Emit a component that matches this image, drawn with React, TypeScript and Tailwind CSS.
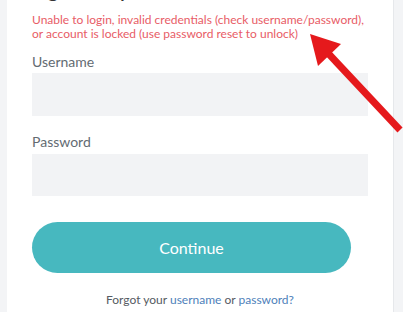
import React from 'react';

function RedArrow() {
  return (
    <svg
      className="absolute left-0 top-0 pointer-events-none"
      width="403"
      height="312"
      viewBox="0 0 403 312"
    >
      <line x1="400" y1="130" x2="326" y2="51" stroke="#e5191c" strokeWidth="7" strokeLinecap="butt" />
      <polygon points="310,34 341,44 318,66" fill="#e5191c" />
    </svg>
  );
}

export default function App() {
  return (
    <div className="relative w-[403px] h-[312px] overflow-hidden bg-[#f3f4f6]" style={{ fontFamily: 'Lato, "Noto Sans", sans-serif' }}>
      <div className="flow-root ml-[7px] w-[387px] h-full bg-white border-r border-[#e6e8eb] pl-[25px]">
        <h1 className="-mt-[22px] text-[20px] leading-[24px] font-semibold text-[#333]">Sign in to your account</h1>

        <p className="mt-[11px] w-[336px] text-[12px] leading-[13.5px] text-[#e85c66]">
          Unable to login, invalid credentials (check username/password), or account is locked (use password reset to unlock)
        </p>

        <div className="mt-[13px]">
          <label className="block text-[14px] leading-[17px] text-[#636b72]">Username</label>
          <div className="mt-[3px] w-[336px] h-[43px] bg-[#f2f3f5]" />
        </div>

        <div className="mt-[17px]">
          <label className="block text-[14px] leading-[17px] text-[#636b72]">Password</label>
          <div className="mt-[4px] w-[336px] h-[42px] bg-[#f2f3f5]" />
        </div>

        <button className="mt-[26px] w-[319px] h-[51px] rounded-full bg-[#47b8bf] text-white text-[16px]">
          Continue
        </button>

        <p className="mt-[18px] -ml-[25px] text-center text-[12px] leading-[18px] text-[#555b62]">
          Forgot your <span className="text-[#4e7fba]">username</span> or <span className="text-[#4e7fba]">password?</span>
        </p>
      </div>
      <RedArrow />
    </div>
  );
}
